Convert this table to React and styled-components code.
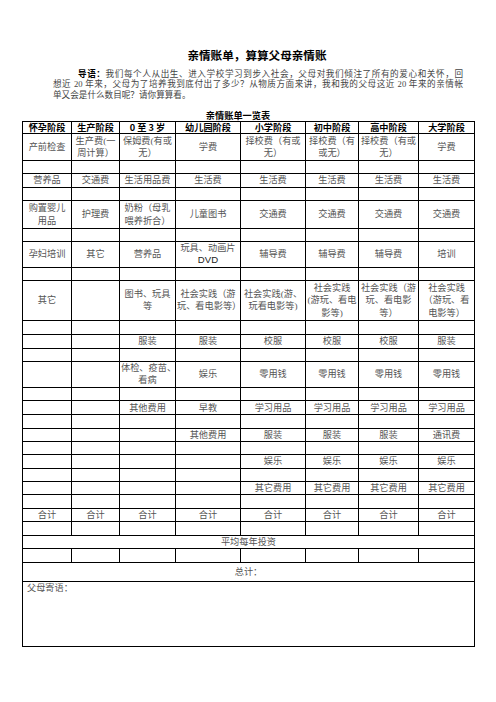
import React from "react";
import styled, { createGlobalStyle } from "styled-components";

const GlobalStyle = createGlobalStyle`
  html, body {
    margin: 0;
    padding: 0;
    background: #ffffff;
  }
  body {
    font-family: "Liberation Serif", "Noto Sans CJK SC", serif;
    color: #444;
  }
`;

const Dvd = styled.span`
  font-family: "Liberation Sans", sans-serif;
  font-size: 9.6px;
  color: #222;
`;

const cols = [49, 48, 56, 65, 65, 53, 60, 56];

const E = { h: 13.3, cells: ["", "", "", "", "", "", "", ""] };

const rows = [
  {
    h: 12,
    head: true,
    cells: ["怀孕阶段", "生产阶段", "0 至 3 岁", "幼儿园阶段", "小学阶段", "初中阶段", "高中阶段", "大学阶段"],
  },
  {
    h: 26.8,
    cells: [
      "产前检查",
      ["生产费(一", "周计算）"],
      ["保姆费(有或", "无）"],
      "学费",
      ["择校费（有或", "无）"],
      ["择校费（有", "或无）"],
      ["择校费（有或", "无）"],
      "学费",
    ],
  },
  E,
  { h: 13.5, cells: ["营养品", "交通费", "生活用品费", "生活费", "生活费", "生活费", "生活费", "生活费"] },
  E,
  {
    h: 28,
    cells: [["购置婴儿", "用品"], "护理费", ["奶粉（母乳", "喂养折合）"], "儿童图书", "交通费", "交通费", "交通费", "交通费"],
  },
  { ...E, h: 12.4 },
  {
    h: 26,
    cells: ["孕妇培训", "其它", "营养品", ["玩具、动画片", <Dvd key="d">DVD</Dvd>], "辅导费", "辅导费", "辅导费", "培训"],
  },
  E,
  {
    h: 40.4,
    cells: [
      "其它",
      "",
      ["图书、玩具", "等"],
      ["社会实践（游", "玩、看电影等）"],
      ["社会实践(游、", "玩看电影等)"],
      ["社会实践", "(游玩、看电", "影等)"],
      ["社会实践（游", "玩、看电影", "等）"],
      ["社会实践", "（游玩、看", "电影等）"],
    ],
  },
  { ...E, h: 14 },
  { h: 13.3, cells: ["", "", "服装", "服装", "校服", "校服", "校服", "服装"] },
  E,
  { h: 26, cells: ["", "", ["体检、疫苗、", "看病"], "娱乐", "零用钱", "零用钱", "零用钱", "零用钱"] },
  { ...E, h: 13.4 },
  { h: 14, cells: ["", "", "其他费用", "早教", "学习用品", "学习用品", "学习用品", "学习用品"] },
  E,
  { h: 13.3, cells: ["", "", "", "其他费用", "服装", "服装", "服装", "通讯费"] },
  { ...E, h: 13.4 },
  { h: 13.3, cells: ["", "", "", "", "娱乐", "娱乐", "娱乐", "娱乐"] },
  E,
  { h: 13.4, cells: ["", "", "", "", "其它费用", "其它费用", "其它费用", "其它费用"] },
  E,
  { h: 13.3, cells: ["合计", "合计", "合计", "合计", "合计", "合计", "合计", "合计"] },
  { ...E, h: 13.4 },
  { h: 13.6, span: "平均每年投资" },
  { ...E, h: 13.4 },
  { h: 19.6, span: "总计：" },
  { h: 65, span: "父母寄语：", note: true },
];

const Page = styled.div`
  width: 496px;
  height: 702px;
  box-sizing: border-box;
  padding-top: 48px;
`;

const Title = styled.h1`
  margin: 0;
  padding-left: 18px;
  text-align: center;
  font-family: "Noto Sans CJK SC", sans-serif;
  font-size: 11.6px;
  line-height: 15px;
  font-weight: 700;
  color: #000;
`;

const Intro = styled.div`
  margin: 5px 33px 0 53px;
  font-family: "Liberation Serif", "Noto Sans CJK SC", serif;
  font-size: 8.6px;
  line-height: 10.4px;
  color: #444;
`;

const IntroLine = styled.div`
  text-align: ${({ $full }) => ($full ? "justify" : "left")};
  text-align-last: ${({ $full }) => ($full ? "justify" : "left")};
  padding-left: ${({ $indent }) => ($indent ? "25px" : "0")};
  white-space: nowrap;
`;

const Lead = styled.b`
  font-family: "Noto Sans CJK SC", sans-serif;
  font-weight: 700;
  color: #000;
`;

const Caption = styled.div`
  margin-top: 10px;
  padding-right: 20px;
  text-align: center;
  font-family: "Noto Sans CJK SC", sans-serif;
  font-size: 9.2px;
  line-height: 11px;
  font-weight: 700;
  color: #000;
`;

const Table = styled.table`
  margin-left: 22px;
  border-collapse: collapse;
  table-layout: fixed;
  width: 452px;
`;

const Row = styled.tr`
  height: ${({ $h }) => $h}px;
`;

const Cell = styled.td`
  border: 1px solid #000;
  padding: 0 1px;
  text-align: center;
  vertical-align: middle;
  overflow: hidden;
  white-space: nowrap;
  font-size: 9.2px;
  line-height: 12.4px;
  color: #555;
`;

const HeadCell = styled(Cell)`
  font-family: "Noto Sans CJK SC", sans-serif;
  font-weight: 700;
  font-size: 9.2px;
  line-height: 11px;
  color: #000;
`;

const NoteCell = styled(Cell)`
  text-align: left;
  vertical-align: top;
  padding: 1px 4px;
  line-height: 11px;
`;

const renderText = (t) =>
  Array.isArray(t)
    ? t.map((part, i) => (
        <React.Fragment key={i}>
          {i > 0 && <br />}
          {part}
        </React.Fragment>
      ))
    : t;

export default function App() {
  return (
    <Page>
      <GlobalStyle />
      <Title>亲情账单，算算父母亲情账</Title>
      <Intro>
        <IntroLine $full $indent>
          <Lead>导语：</Lead>我们每个人从出生、进入学校学习到步入社会，父母对我们倾注了所有的爱心和关怀，回
        </IntroLine>
        <IntroLine $full>想近 20 年来，父母为了培养我到底付出了多少？从物质方面来讲，我和我的父母这近 20 年来的亲情帐</IntroLine>
        <IntroLine>单又会是什么数目呢？请你算算看。</IntroLine>
      </Intro>
      <Caption>亲情账单一览表</Caption>
      <Table>
        <colgroup>
          {cols.map((w, i) => (
            <col key={i} style={{ width: w }} />
          ))}
        </colgroup>
        <tbody>
          {rows.map((r, ri) => (
            <Row key={ri} $h={r.h}>
              {r.span ? (
                r.note ? (
                  <NoteCell colSpan={8}>{r.span}</NoteCell>
                ) : (
                  <Cell colSpan={8}>{r.span}</Cell>
                )
              ) : (
                r.cells.map((c, ci) =>
                  r.head ? <HeadCell key={ci}>{c}</HeadCell> : <Cell key={ci}>{renderText(c)}</Cell>
                )
              )}
            </Row>
          ))}
        </tbody>
      </Table>
    </Page>
  );
}
